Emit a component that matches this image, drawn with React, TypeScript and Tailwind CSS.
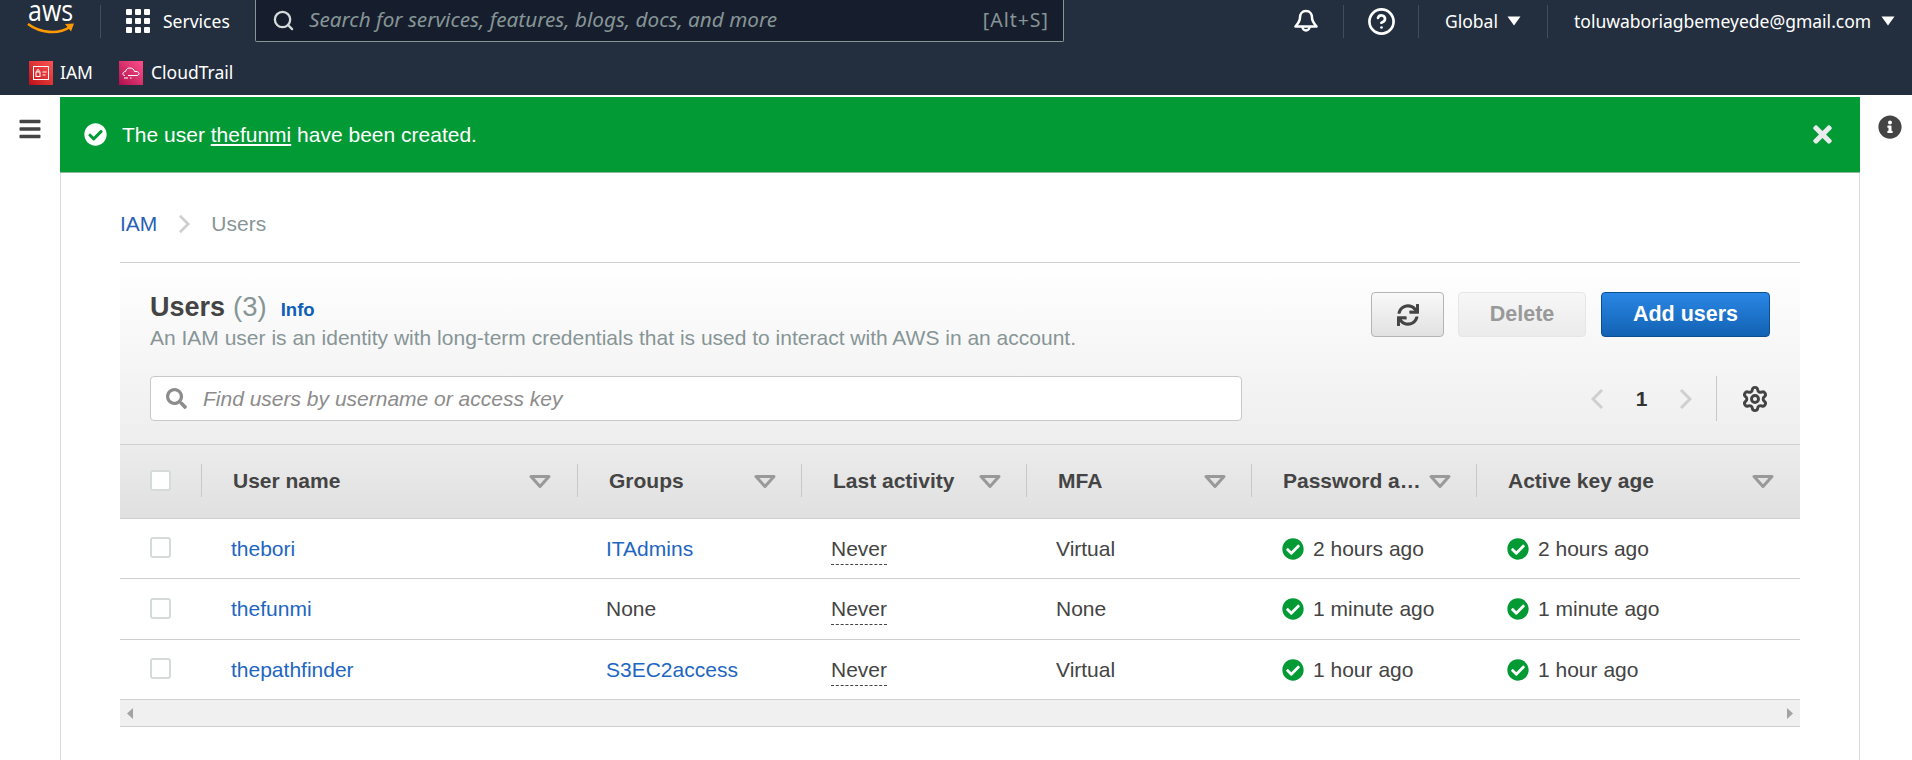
import { Settings, CircleHelp, Search } from "lucide-react";
import { FaCheckCircle, FaInfoCircle, FaSync, FaTimes, FaBars, FaSearch } from "react-icons/fa";

const rows = [
  { name: "thebori", group: "ITAdmins", link: true, mfa: "Virtual", age: "2 hours ago", h: "h-[60px]" },
  { name: "thefunmi", group: "None", link: false, mfa: "None", age: "1 minute ago", h: "h-[61px]" },
  { name: "thepathfinder", group: "S3EC2access", link: true, mfa: "Virtual", age: "1 hour ago", h: "h-[60px]" },
];

const cols = "grid grid-cols-[81px_376px_224px_225px_225px_225px_324px]";

function Tri() {
  return (
    <svg width="22" height="13" viewBox="0 0 22 13" className="shrink-0">
      <path d="M2 1.500h18L11 11.500z" fill="#e4e4e4" stroke="#999" strokeWidth="3" strokeLinejoin="round" />
    </svg>
  );
}

function Caret({ className = "" }: { className?: string }) {
  return (
    <svg width="14" height="10" viewBox="0 0 14 10" className={`shrink-0 ${className}`}>
      <path d="M0.500 0.500h13L7 9.500z" fill="#fff" />
    </svg>
  );
}

function Chev({ dir, w, h, className = "" }: { dir: "l" | "r"; w: number; h: number; className?: string }) {
  return (
    <svg width={w} height={h} viewBox="0 0 13 22" fill="none" className={`shrink-0 ${className}`}>
      <path d={dir === "r" ? "M2 2l9 9-9 9" : "M11 2l-9 9 9 9"} stroke="#cfcfcf" strokeWidth="3" />
    </svg>
  );
}

function Head({ label, pad = "pr-[25px]" }: { label: string; pad?: string }) {
  return (
    <div className={`flex items-center justify-between ${pad} pl-[32px] relative`}>
      <span className="absolute left-0 top-[19px] bottom-[21px] w-px bg-[#c8c8c8]" />
      <span className="w-[139px] -mt-[2px] truncate font-bold text-[#444]">{label}</span>
      <Tri />
    </div>
  );
}

function Box() {
  return <span className="block w-[21px] h-[21px] mb-[2px] bg-white border-2 border-[#d5dbdb] rounded-[3px]" />;
}

function Age({ text }: { text: string }) {
  return (
    <div className="flex items-center gap-[9px] pl-[31px] text-[#444]">
      <FaCheckCircle className="text-[#029a35] text-[22px] shrink-0" />
      <span>{text}</span>
    </div>
  );
}

function Sep({ className = "" }: { className?: string }) {
  return <span className={`w-px h-[33px] bg-[#414d5c] shrink-0 ${className}`} />;
}

export default function App() {
  return (
    <div className="w-[1912px] h-[760px] overflow-hidden bg-white font-['Liberation_Sans',sans-serif] text-[21px] text-[#444]">
      <header className="h-[95px] bg-[#232f3e] text-white font-['Noto_Sans',sans-serif]">
        <div className="h-[42px] flex items-center">
          <div className="w-[100px] h-[42px] relative shrink-0">
            <span className="absolute left-[28px] top-0 text-[25px] leading-[22px] scale-y-[1.2] origin-bottom font-['Open_Sans',sans-serif]">aws</span>
            <svg width="48" height="14" viewBox="0 0 48 14" className="absolute left-[27px] top-[22px]">
              <path d="M1 2c12 9 30 11 42 3" fill="none" stroke="#ff9900" strokeWidth="2.6" />
              <path d="M38 2l9-.5-3 8z" fill="#ff9900" />
            </svg>
          </div>
          <Sep />
          <div className="w-[154px] flex items-center pl-[25px] gap-[13px] shrink-0">
            <span className="grid grid-cols-3 gap-[3px]">
              {Array.from({ length: 9 }).map((_, i) => (
                <i key={i} className="block w-[6px] h-[6px] bg-white rounded-[1px]" />
              ))}
            </span>
            <span className="text-[17.5px]">Services</span>
          </div>
          <div className="w-[809px] h-[42px] -mt-px bg-[#161e2d] border border-[#879596] border-t-0 rounded-b-[2px] flex items-center pl-[16px] pr-[14px] shrink-0">
            <Search size={23} strokeWidth={2.4} className="text-[#d5dbdb]" />
            <span className="ml-[14px] flex-1 italic text-[20.7px] text-[#879596]">Search for services, features, blogs, docs, and more</span>
            <span className="text-[19.5px] tracking-[1px] text-[#879596]">[Alt+S]</span>
          </div>
          <div className="flex items-center h-full ml-[230px]">
            <svg width="24" height="25" viewBox="0 0 24 25" fill="none" stroke="#fff" strokeWidth="2.500" strokeLinejoin="round">
              <path d="M12 2c-4 0-6 3-6 6.500 0 4-2.500 6.500-4.500 9h21c-2-2.500-4.500-5-4.500-9C18 5 16 2 12 2z" />
              <path d="M8.500 18a3.500 3.500 0 0 0 7 0" />
            </svg>
            <Sep className="ml-[25px]" />
            <CircleHelp size={29} strokeWidth={2.2} className="ml-[23px] mr-[22px]" />
            <Sep />
            <span className="ml-[26px] w-[52px] text-[17.5px]">Global</span>
            <Caret className="ml-[10px]" />
            <Sep className="ml-[26px]" />
            <span className="ml-[26px] text-[17.5px] whitespace-nowrap">toluwaboriagbemeyede@gmail.com</span>
            <Caret className="ml-[10px]" />
          </div>
        </div>
        <div className="h-[53px] flex items-center pl-[29px] pt-[8px] text-[17.5px]">
          <span className="w-[24px] h-[24px] bg-gradient-to-tr from-[#bd0816] to-[#ff5252] flex items-center justify-center">
            <svg width="16" height="14" viewBox="0 0 16 14" fill="none" stroke="#fff" strokeWidth="1">
              <rect x="0.5" y="0.5" width="15" height="13" />
              <rect x="3" y="6" width="4" height="4.5" />
              <path d="M4 6V4.5a1 1 0 0 1 2 0V6M9.5 6h4M9.5 9h3" />
            </svg>
          </span>
          <span className="ml-[7px] w-[30px]">IAM</span>
          <span className="ml-[29px] w-[24px] h-[24px] bg-gradient-to-tr from-[#b0084d] to-[#ff4f8b] flex items-center justify-center">
            <svg width="18" height="12" viewBox="0 0 18 12" fill="none" stroke="#fff" strokeWidth="1">
              <path d="M3 8.500C1 8.500.5 7 1 6c.5-1 2-1.500 2.500-1.500C4 2 6 1 8 1c2.500 0 4 1.500 4.500 3.500 2-.5 4.500.5 4.500 2 0 1-1 2-2 2H6M2 11h4M8 11h1.500" />
            </svg>
          </span>
          <span className="ml-[8px]">CloudTrail</span>
        </div>
      </header>
      <div className="h-[2px] bg-white" />
      <div className="h-[663px] flex">
        <aside className="w-[60px] shrink-0 pt-[20px] pl-[18px] text-[#444]">
          <FaBars className="text-[24px]" />
        </aside>
        <main className="w-[1800px] shrink-0 border-x border-[#d5dbdb] relative">
          <div className="-mx-px h-[76px] bg-[#029a35] border-b border-[#8fb79a] flex items-center pl-[24px] pr-[24px] text-white text-[21px]">
            <FaCheckCircle className="text-[23px] shrink-0" />
            <span className="ml-[15px] flex-1">
              The user <u className="underline-offset-2">thefunmi</u> have been created.
            </span>
            <FaTimes className="text-[27px] text-[#e9ebed]" />
          </div>
          <div className="px-[59px]">
            <nav className="h-[89px] flex items-center gap-[21px] pt-[12px]">
              <span className="text-[#2a5fb8]">IAM</span>
              <Chev dir="r" w={12} h={20} />
              <span className="text-[#879596]">Users</span>
            </nav>
            <section className="border-t border-[#cfcfcf]">
              <div className="h-[181px] bg-gradient-to-b from-white to-[#eeeeee] px-[30px] pt-[29px]">
                <div className="flex">
                  <div className="flex-1">
                    <div className="flex items-baseline h-[36px] -mt-[6px]">
                      <span className="text-[27px] font-bold text-[#444]">Users</span>
                      <span className="ml-[8px] text-[27.500px] text-[#879596]">(3)</span>
                      <span className="ml-[14px] text-[18.500px] font-bold text-[#0f5fb8]">Info</span>
                    </div>
                    <p className="mt-[4px] leading-[24px] text-[#879596]">
                      An IAM user is an identity with long-term credentials that is used to interact with AWS in an account.
                    </p>
                  </div>
                  <div className="flex h-[45px] items-start">
                    <button className="w-[73px] h-[45px] rounded-[4px] border border-[#b4b4b4] bg-gradient-to-b from-[#f9f9f9] to-[#e1e1e1] flex items-center justify-center">
                      <FaSync className="text-[22px] text-[#444]" />
                    </button>
                    <button className="ml-[14px] w-[128px] h-[45px] rounded-[4px] border border-[#e6e6e6] bg-gradient-to-b from-[#f7f7f7] to-[#ebebeb] font-bold text-[#999] text-[21.500px]">
                      Delete
                    </button>
                    <button className="ml-[15px] w-[169px] h-[45px] rounded-[4px] border border-[#0b4f93] bg-gradient-to-b from-[#2a87e5] to-[#1262b3] font-bold text-white text-[21.500px]">
                      Add users
                    </button>
                  </div>
                </div>
                <div className="flex items-center mt-[26px]">
                  <div className="w-[1092px] h-[45px] rounded-[4px] border border-[#c8c8c8] bg-white flex items-center pl-[15px]">
                    <FaSearch className="text-[21px] text-[#8c8c8c]" />
                    <span className="ml-[16px] italic text-[#8c8c8c]">Find users by username or access key</span>
                  </div>
                  <div className="ml-auto flex items-center">
                    <Chev dir="l" w={13} h={22} />
                    <span className="mx-[32px] font-bold text-[21px] w-[11px] flex justify-center text-[#333]">1</span>
                    <Chev dir="r" w={13} h={22} />
                    <span className="ml-[24px] w-px h-[45px] bg-[#c8c8c8]" />
                    <Settings size={28} strokeWidth={2.500} className="ml-[24px] mr-[1px] text-[#444]" />
                  </div>
                </div>
              </div>
              <div className={`${cols} h-[75px] border-y border-[#cfcfcf] bg-gradient-to-b from-[#ececec] to-[#e0e0e0]`}>
                <div className="flex items-center pl-[30px]"><Box /></div>
                <div className="flex items-center justify-between pr-[26px] pl-[32px] relative">
                  <span className="absolute left-0 top-[19px] bottom-[21px] w-px bg-[#c8c8c8]" />
                  <span className="-mt-[2px] font-bold text-[#444]">User name</span>
                  <Tri />
                </div>
                <Head label="Groups" />
                <Head label="Last activity" />
                <Head label="MFA" />
                <Head label="Password age" />
                <div className="relative flex items-center justify-between pl-[32px] pr-[26px]">
                  <span className="absolute left-0 top-[19px] bottom-[21px] w-px bg-[#c8c8c8]" />
                  <span className="-mt-[2px] font-bold text-[#444]">Active key age</span>
                  <Tri />
                </div>
              </div>
              {rows.map((r) => (
                <div key={r.name} className={`${cols} ${r.h} border-b border-[#cfcfcf]`}>
                  <div className="flex items-center pl-[30px]"><Box /></div>
                  <div className="flex items-center pl-[30px] text-[#1d66c1]">{r.name}</div>
                  <div className={`flex items-center pl-[29px] ${r.link ? "text-[#1d66c1]" : ""}`}>{r.group}</div>
                  <div className="flex items-center pl-[30px]">
                    <span className="border-b border-dashed border-[#444] leading-[24px] pb-[3px] mt-[4px]">Never</span>
                  </div>
                  <div className="flex items-center pl-[30px]">{r.mfa}</div>
                  <Age text={r.age} />
                  <Age text={r.age} />
                </div>
              ))}
              <div className="h-[27px] bg-[#f0f0f0] border-b border-[#cfcfcf] flex items-center justify-between px-[7px]">
                <svg width="6" height="11" viewBox="0 0 6 11"><path d="M6 0v11L0 5.500z" fill="#a3a3a3" /></svg>
                <svg width="6" height="11" viewBox="0 0 6 11"><path d="M0 0v11l6-5.500z" fill="#a3a3a3" /></svg>
              </div>
            </section>
          </div>
        </main>
        <aside className="flex-1 pt-[18px] pl-[18px]">
          <FaInfoCircle className="text-[24px] text-[#444]" />
        </aside>
      </div>
    </div>
  );
}
